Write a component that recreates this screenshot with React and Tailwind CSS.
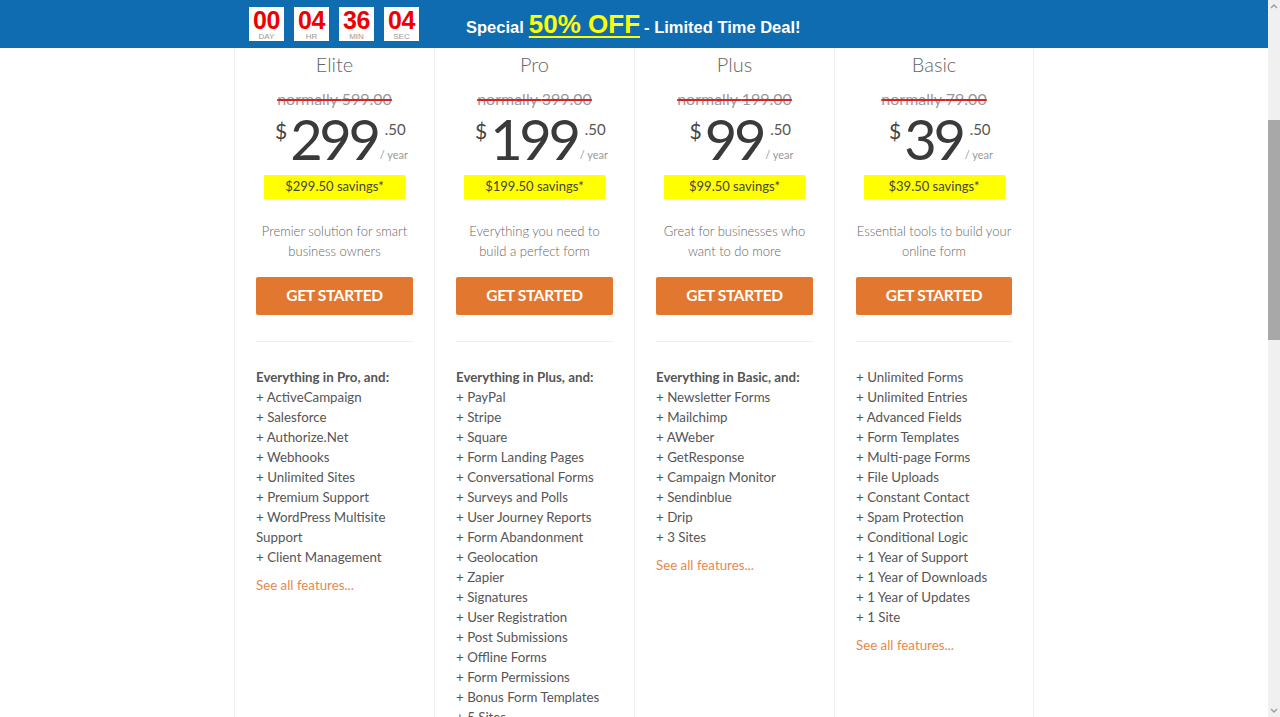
import React from "react";

const plans = [
  {
    name: "Elite",
    normal: "599.00",
    price: "299",
    savings: "$299.50 savings*",
    desc: ["Premier solution for smart", "business owners"],
    header: "Everything in Pro, and:",
    items: [
      "ActiveCampaign",
      "Salesforce",
      "Authorize.Net",
      "Webhooks",
      "Unlimited Sites",
      "Premium Support",
      "WordPress Multisite Support",
      "Client Management",
    ],
    more: true,
  },
  {
    name: "Pro",
    normal: "399.00",
    price: "199",
    savings: "$199.50 savings*",
    desc: ["Everything you need to", "build a perfect form"],
    header: "Everything in Plus, and:",
    items: [
      "PayPal",
      "Stripe",
      "Square",
      "Form Landing Pages",
      "Conversational Forms",
      "Surveys and Polls",
      "User Journey Reports",
      "Form Abandonment",
      "Geolocation",
      "Zapier",
      "Signatures",
      "User Registration",
      "Post Submissions",
      "Offline Forms",
      "Form Permissions",
      "Bonus Form Templates",
      "5 Sites",
    ],
    more: true,
  },
  {
    name: "Plus",
    normal: "199.00",
    price: "99",
    savings: "$99.50 savings*",
    desc: ["Great for businesses who", "want to do more"],
    header: "Everything in Basic, and:",
    items: [
      "Newsletter Forms",
      "Mailchimp",
      "AWeber",
      "GetResponse",
      "Campaign Monitor",
      "Sendinblue",
      "Drip",
      "3 Sites",
    ],
    more: true,
  },
  {
    name: "Basic",
    normal: "79.00",
    price: "39",
    savings: "$39.50 savings*",
    desc: ["Essential tools to build your", "online form"],
    header: null,
    items: [
      "Unlimited Forms",
      "Unlimited Entries",
      "Advanced Fields",
      "Form Templates",
      "Multi-page Forms",
      "File Uploads",
      "Constant Contact",
      "Spam Protection",
      "Conditional Logic",
      "1 Year of Support",
      "1 Year of Downloads",
      "1 Year of Updates",
      "1 Site",
    ],
    more: true,
  },
];

function Counter({ value, label }) {
  return (
    <div className="flex h-[34px] w-[35px] flex-col items-center bg-white">
      <div className="h-[24px] text-[25px] font-bold leading-[27px] tracking-[-0.5px] text-[#ee0000]">
        {value}
      </div>
      <div className="mt-[1px] text-[8px] leading-[9px] text-[#999]">{label}</div>
    </div>
  );
}

function Plan({ p, last }) {
  return (
    <div
      className={
        "flex w-[200px] flex-col border-l border-[#eeeeee] px-[21px] pt-[1px] " +
        (last ? "border-r" : "")
      }
    >
      <div className="text-center text-[20px] font-light leading-[30px] text-[#666]">{p.name}</div>
      <div className="mt-[8px] text-center text-[16px] leading-[24px] text-[#999] line-through decoration-[#dd2222] decoration-[1.5px]">
        normally {p.normal}
      </div>
      <div className="flex h-[56px] items-stretch justify-center pl-[14px]">
        <div className="mr-[3px] mt-[9px] text-[21px] leading-[22px] text-[#444]">$</div>
        <div className="text-[56px] leading-[56px] tracking-[-3.3px] text-[#3a3a3a]">{p.price}</div>
        <div className="ml-[2px] flex flex-col">
          <div className="ml-[5px] mt-[10px] text-[15px] leading-[16px] text-[#555]">.50</div>
          <div className="mt-[12px] text-[11px] leading-[12px] text-[#999]">/ year</div>
        </div>
      </div>
      <div className="mx-auto mt-[8px] flex h-[24px] w-[141px] items-center justify-center bg-[#ffff00] text-[13px] text-[#444]">
        {p.savings}
      </div>
      <div className="mt-[22px] text-center text-[13px] font-light leading-[20px] text-[#666]">
        {p.desc.map((d) => (
          <div key={d}>{d}</div>
        ))}
      </div>
      <div className="mt-[16px] flex h-[38px] items-center justify-center rounded-[2px] bg-[#e27830] text-[15.5px] font-bold tracking-[-0.3px] text-white">
        GET STARTED
      </div>
      <div className="mt-[26px] h-px bg-[#f0f0f0]" />
      <div className="mt-[25px] text-[13.3px] leading-[20px] text-[#555]">
        {p.header && <div className="font-bold">{p.header}</div>}
        {p.items.map((it) => (
          <div key={it}>+ {it}</div>
        ))}
        {p.more && <div className="mt-[8px] text-[#e8874d]">See all features...</div>}
      </div>
    </div>
  );
}

export default function App() {
  return (
    <div className="flex h-[717px] w-[1280px] overflow-hidden bg-white" style={{ fontFamily: "Lato, 'Open Sans', sans-serif" }}>
      <div className="flex w-[1268px] flex-col">
        <div
          className="flex h-[48px] shrink-0 items-center bg-[#106cb1] pl-[249px]"
          style={{ fontFamily: "'Liberation Sans', Arial, sans-serif" }}
        >
          <div className="flex gap-[10px]">
            <Counter value="00" label="DAY" />
            <Counter value="04" label="HR" />
            <Counter value="36" label="MIN" />
            <Counter value="04" label="SEC" />
          </div>
          <div className="ml-[47px] flex items-baseline text-[16.5px] font-bold text-white">
            <span>Special</span>
            <span className="ml-[5px] text-[26px] text-[#ffff00] underline decoration-[2px] underline-offset-[3px]">
              50% OFF
            </span>
            <span className="ml-[4px]">- Limited Time Deal!</span>
          </div>
        </div>
        <div className="flex justify-center">
          {plans.map((p, i) => (
            <Plan key={p.name} p={p} last={i === plans.length - 1} />
          ))}
        </div>
      </div>
      <div className="flex w-[12px] shrink-0 flex-col items-center bg-[#f0f0f0]">
        <svg width="8" height="6" viewBox="0 0 8 6" className="mt-[3px]">
          <path d="M1 5 L4 2 L7 5" fill="none" stroke="#9a9a9a" strokeWidth="1.3" />
        </svg>
        <div className="mt-[111px] h-[220px] w-full bg-[#a8a8a8]" />
        <div className="flex-1" />
        <svg width="8" height="6" viewBox="0 0 8 6" className="mb-[3px]">
          <path d="M1 1 L4 4 L7 1" fill="none" stroke="#9a9a9a" strokeWidth="1.3" />
        </svg>
      </div>
    </div>
  );
}
